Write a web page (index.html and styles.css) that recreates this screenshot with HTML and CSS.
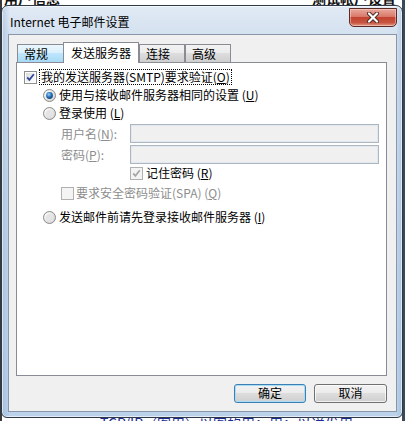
FILE: index.html
```html
<!DOCTYPE html>
<html>
<head>
<meta charset="utf-8">
<link rel="stylesheet" href="styles.css">
</head>
<body>
<div class="page">
  <div class="page-top"><span>用户信息</span><span>测试帐户设置</span></div>
  <div class="page-bottom"><span class="bullet">•</span><span>TCP/IP（图用）以图的用：用：以送发用</span></div>
</div>
<div class="window">
  <div class="titlebar">
    <span class="title">Internet 电子邮件设置</span>
    <div class="close">
      <svg width="14" height="11" viewBox="0 0 14 11">
        <path d="M3 1.5 L11 9.5 M11 1.5 L3 9.5" stroke="#4a2a25" stroke-width="4" stroke-linecap="round"/>
        <path d="M3 1.5 L11 9.5 M11 1.5 L3 9.5" stroke="#ffffff" stroke-width="2.2" stroke-linecap="round"/>
      </svg>
    </div>
  </div>
  <div class="client">
    <div class="tabs">
      <div class="tab hot">常规</div>
      <div class="tab active">发送服务器</div>
      <div class="tab">连接</div>
      <div class="tab">高级</div>
    </div>
    <div class="panel">
      <div class="row r1">
        <svg class="box" width="13" height="13" viewBox="0 0 13 13">
          <defs><linearGradient id="cb" x1="0" y1="0" x2="1" y2="1"><stop offset="0" stop-color="#dcdcdc"/><stop offset="1" stop-color="#ffffff"/></linearGradient></defs>
          <rect x="0.5" y="0.5" width="12" height="12" fill="#fff" stroke="#8e8f8f"/>
          <rect x="2" y="2" width="9" height="9" fill="url(#cb)"/>
          <path d="M3.2 6.3 L5.4 8.8 L9.8 3.2" fill="none" stroke="#31469a" stroke-width="1.8"/>
        </svg>
        <span class="focus">我的发送服务器(SMTP)要求验证(<u>O</u>)</span>
      </div>
      <div class="row r2">
        <svg class="box" width="13" height="13" viewBox="0 0 13 13">
          <defs>
            <radialGradient id="rb" cx="0.35" cy="0.35" r="0.8"><stop offset="0" stop-color="#ffffff"/><stop offset="1" stop-color="#cfcfcf"/></radialGradient>
            <radialGradient id="rd" cx="0.4" cy="0.35" r="0.7"><stop offset="0" stop-color="#9fd3f5"/><stop offset="0.5" stop-color="#2b78c0"/><stop offset="1" stop-color="#0d3a6c"/></radialGradient>
          </defs>
          <circle cx="6.5" cy="6.5" r="6" fill="url(#rb)" stroke="#8a8a8a"/>
          <circle cx="6.5" cy="6.5" r="3.4" fill="url(#rd)"/>
        </svg>
        <span>使用与接收邮件服务器相同的设置 (<u>U</u>)</span>
      </div>
      <div class="row r3">
        <svg class="box" width="13" height="13" viewBox="0 0 13 13">
          <circle cx="6.5" cy="6.5" r="6" fill="url(#rb)" stroke="#8a8a8a"/>
          <circle cx="6.5" cy="6.5" r="3.6" fill="#e4e4e4"/>
        </svg>
        <span>登录使用 (<u>L</u>)</span>
      </div>
      <div class="row field f1">
        <span class="flabel">用户名(<u>N</u>):</span>
        <div class="input"></div>
      </div>
      <div class="row field f2">
        <span class="flabel">密码(<u>P</u>):</span>
        <div class="input"></div>
      </div>
      <div class="row r6">
        <svg class="box" width="13" height="13" viewBox="0 0 13 13">
          <rect x="0.5" y="0.5" width="12" height="12" fill="#f4f4f4" stroke="#b1b1b1"/>
          <path d="M3.2 6.3 L5.4 8.8 L9.8 3.2" fill="none" stroke="#a8a8a8" stroke-width="1.8"/>
        </svg>
        <span>记住密码 (<u>R</u>)</span>
      </div>
      <div class="row r7">
        <svg class="box" width="13" height="13" viewBox="0 0 13 13">
          <rect x="0.5" y="0.5" width="12" height="12" fill="#f4f4f4" stroke="#b1b1b1"/>
        </svg>
        <span class="dis">要求安全密码验证(SPA) (<u>Q</u>)</span>
      </div>
      <div class="row r8">
        <svg class="box" width="13" height="13" viewBox="0 0 13 13">
          <circle cx="6.5" cy="6.5" r="6" fill="url(#rb)" stroke="#8a8a8a"/>
          <circle cx="6.5" cy="6.5" r="3.6" fill="#e4e4e4"/>
        </svg>
        <span>发送邮件前请先登录接收邮件服务器 (<u>I</u>)</span>
      </div>
    </div>
    <div class="buttons">
      <div class="btn default">确定</div>
      <div class="btn">取消</div>
    </div>
  </div>
</div>
</body>
</html>
```

FILE: styles.css
```css
html, body {
  margin: 0;
  padding: 0;
}
body {
  width: 405px;
  height: 421px;
  overflow: hidden;
  position: relative;
  background: #ffffff;
  font-family: "Noto Sans CJK SC", "Liberation Sans", sans-serif;
  font-size: 12px;
  color: #000;
}
.page {
  height: 421px;
  display: flex;
  flex-direction: column;
  justify-content: space-between;
  border-left: 2px solid #3a3a3a;
  border-right: 3px solid #3a4a5a;
  box-sizing: border-box;
  overflow: hidden;
}
.page-top {
  display: flex;
  justify-content: space-between;
  margin-top: -9px;
  padding: 0 6px 0 2px;
  font-size: 14px;
  font-weight: bold;
  line-height: 14px;
  color: #111;
  white-space: nowrap;
}
.page-bottom {
  display: flex;
  gap: 8px;
  padding-left: 76px;
  margin-bottom: -9px;
  font-size: 14px;
  line-height: 14px;
  color: #1b2a8e;
  white-space: nowrap;
  overflow: hidden;
}
.bullet {
  color: #000;
}
u {
  text-decoration: underline;
  text-underline-offset: 1px;
}

/* Window */
.window {
  position: absolute;
  left: 1px;
  top: 5px;
  width: 402px;
  height: 413px;
  box-sizing: border-box;
  border: 1px solid #2e3a48;
  border-radius: 7px 7px 6px 6px;
  background: linear-gradient(90deg, rgba(120,160,205,0.35) 0, rgba(255,255,255,0) 8px, rgba(255,255,255,0) 394px, rgba(120,160,205,0.35) 100%),
              linear-gradient(180deg, #e1eaf5 0, #d4e1ef 28px, #c3d6eb 60%, #bcd2ea 100%);
  box-shadow: inset 0 0 0 1px rgba(255,255,255,0.6);
  display: flex;
  flex-direction: column;
}
.titlebar {
  height: 28px;
  display: flex;
  justify-content: space-between;
  align-items: flex-start;
  padding: 0 5px 0 8px;
}
.title {
  margin-top: 9px;
  line-height: 14px;
  font-size: 12px;
  color: #000;
}
.close {
  margin-top: 2px;
  width: 48px;
  height: 19px;
  box-sizing: border-box;
  border: 1px solid #5c2a24;
  border-radius: 0 0 5px 5px;
  background: linear-gradient(180deg, #e9a99c 0, #d9786a 45%, #c2432f 50%, #c75440 80%, #e19a86 100%);
  box-shadow: inset 0 0 0 1px rgba(255,220,210,0.5);
  display: flex;
  align-items: center;
  justify-content: center;
}

/* Client area */
.client {
  flex: 1;
  margin: 0 5px 5px 6px;
  border: 1px solid #8796a8;
  background: #f0f0f0;
  display: flex;
  flex-direction: column;
  padding: 7px 9px 0 7px;
}
.tabs {
  display: flex;
  align-items: flex-end;
  height: 20px;
  padding-left: 1px;
  position: relative;
  z-index: 1;
}
.tab {
  width: 46px;
  height: 18px;
  box-sizing: border-box;
  border: 1px solid #898c95;
  border-bottom: none;
  padding-left: 6px;
  line-height: 18px;
  background: linear-gradient(180deg, #f3f3f3 0, #ebebeb 50%, #dddddd 50%, #cfcfcf 100%);
}
.tab.hot {
  background: linear-gradient(180deg, #eaf6fd 0, #d9f0fc 50%, #bee6fd 50%, #a7d9f5 100%);
  border-right: none;
}
.tab.active {
  width: 76px;
  height: 21px;
  margin-bottom: -1px;
  background: #ffffff;
  padding-left: 7px;
  line-height: 19px;
}
.panel {
  height: 314px;
  box-sizing: border-box;
  border: 1px solid #898c95;
  background: #ffffff;
  padding: 5px 0 0 7px;
}
.row {
  display: flex;
  align-items: center;
  height: 18px;
  line-height: 14px;
  white-space: nowrap;
}
.box {
  flex: none;
  margin-right: 3px;
}
.focus {
  border: 1px dotted #000;
  padding: 0 1px;
  margin-left: -1px;
  line-height: 14px;
}
.r2, .r3, .r8 {
  margin-left: 19px;
}
.field {
  height: 19px;
  margin-top: 2px;
  margin-left: 37px;
}
.flabel {
  width: 69px;
  color: #8d8d8d;
}
.input {
  width: 249px;
  height: 19px;
  box-sizing: border-box;
  border: 1px solid #abb6c1;
  box-shadow: inset 0 0 0 1px #e3e9ef;
  background: #f0f0f0;
}
.r6 {
  margin-left: 106px;
}
.r7 {
  margin-left: 37px;
  margin-top: 2px;
}
.r7 .box {
  margin-right: 2px;
}
.r8 {
  margin-top: 6px;
}
.dis {
  color: #8d8d8d;
}

/* Buttons */
.buttons {
  display: flex;
  justify-content: flex-end;
  gap: 8px;
  margin-top: 8px;
}
.btn {
  width: 73px;
  height: 19px;
  box-sizing: border-box;
  border: 1px solid #707070;
  border-radius: 3px;
  background: linear-gradient(180deg, #f2f2f2 0, #ebebeb 50%, #dddddd 50%, #cfcfcf 100%);
  box-shadow: inset 0 0 0 1px rgba(255,255,255,0.7);
  text-align: center;
  line-height: 16px;
}
.btn.default {
  width: 72px;
  border-color: #3c7fb1;
  box-shadow: inset 0 0 0 1px #a9dcf6;
}
```
